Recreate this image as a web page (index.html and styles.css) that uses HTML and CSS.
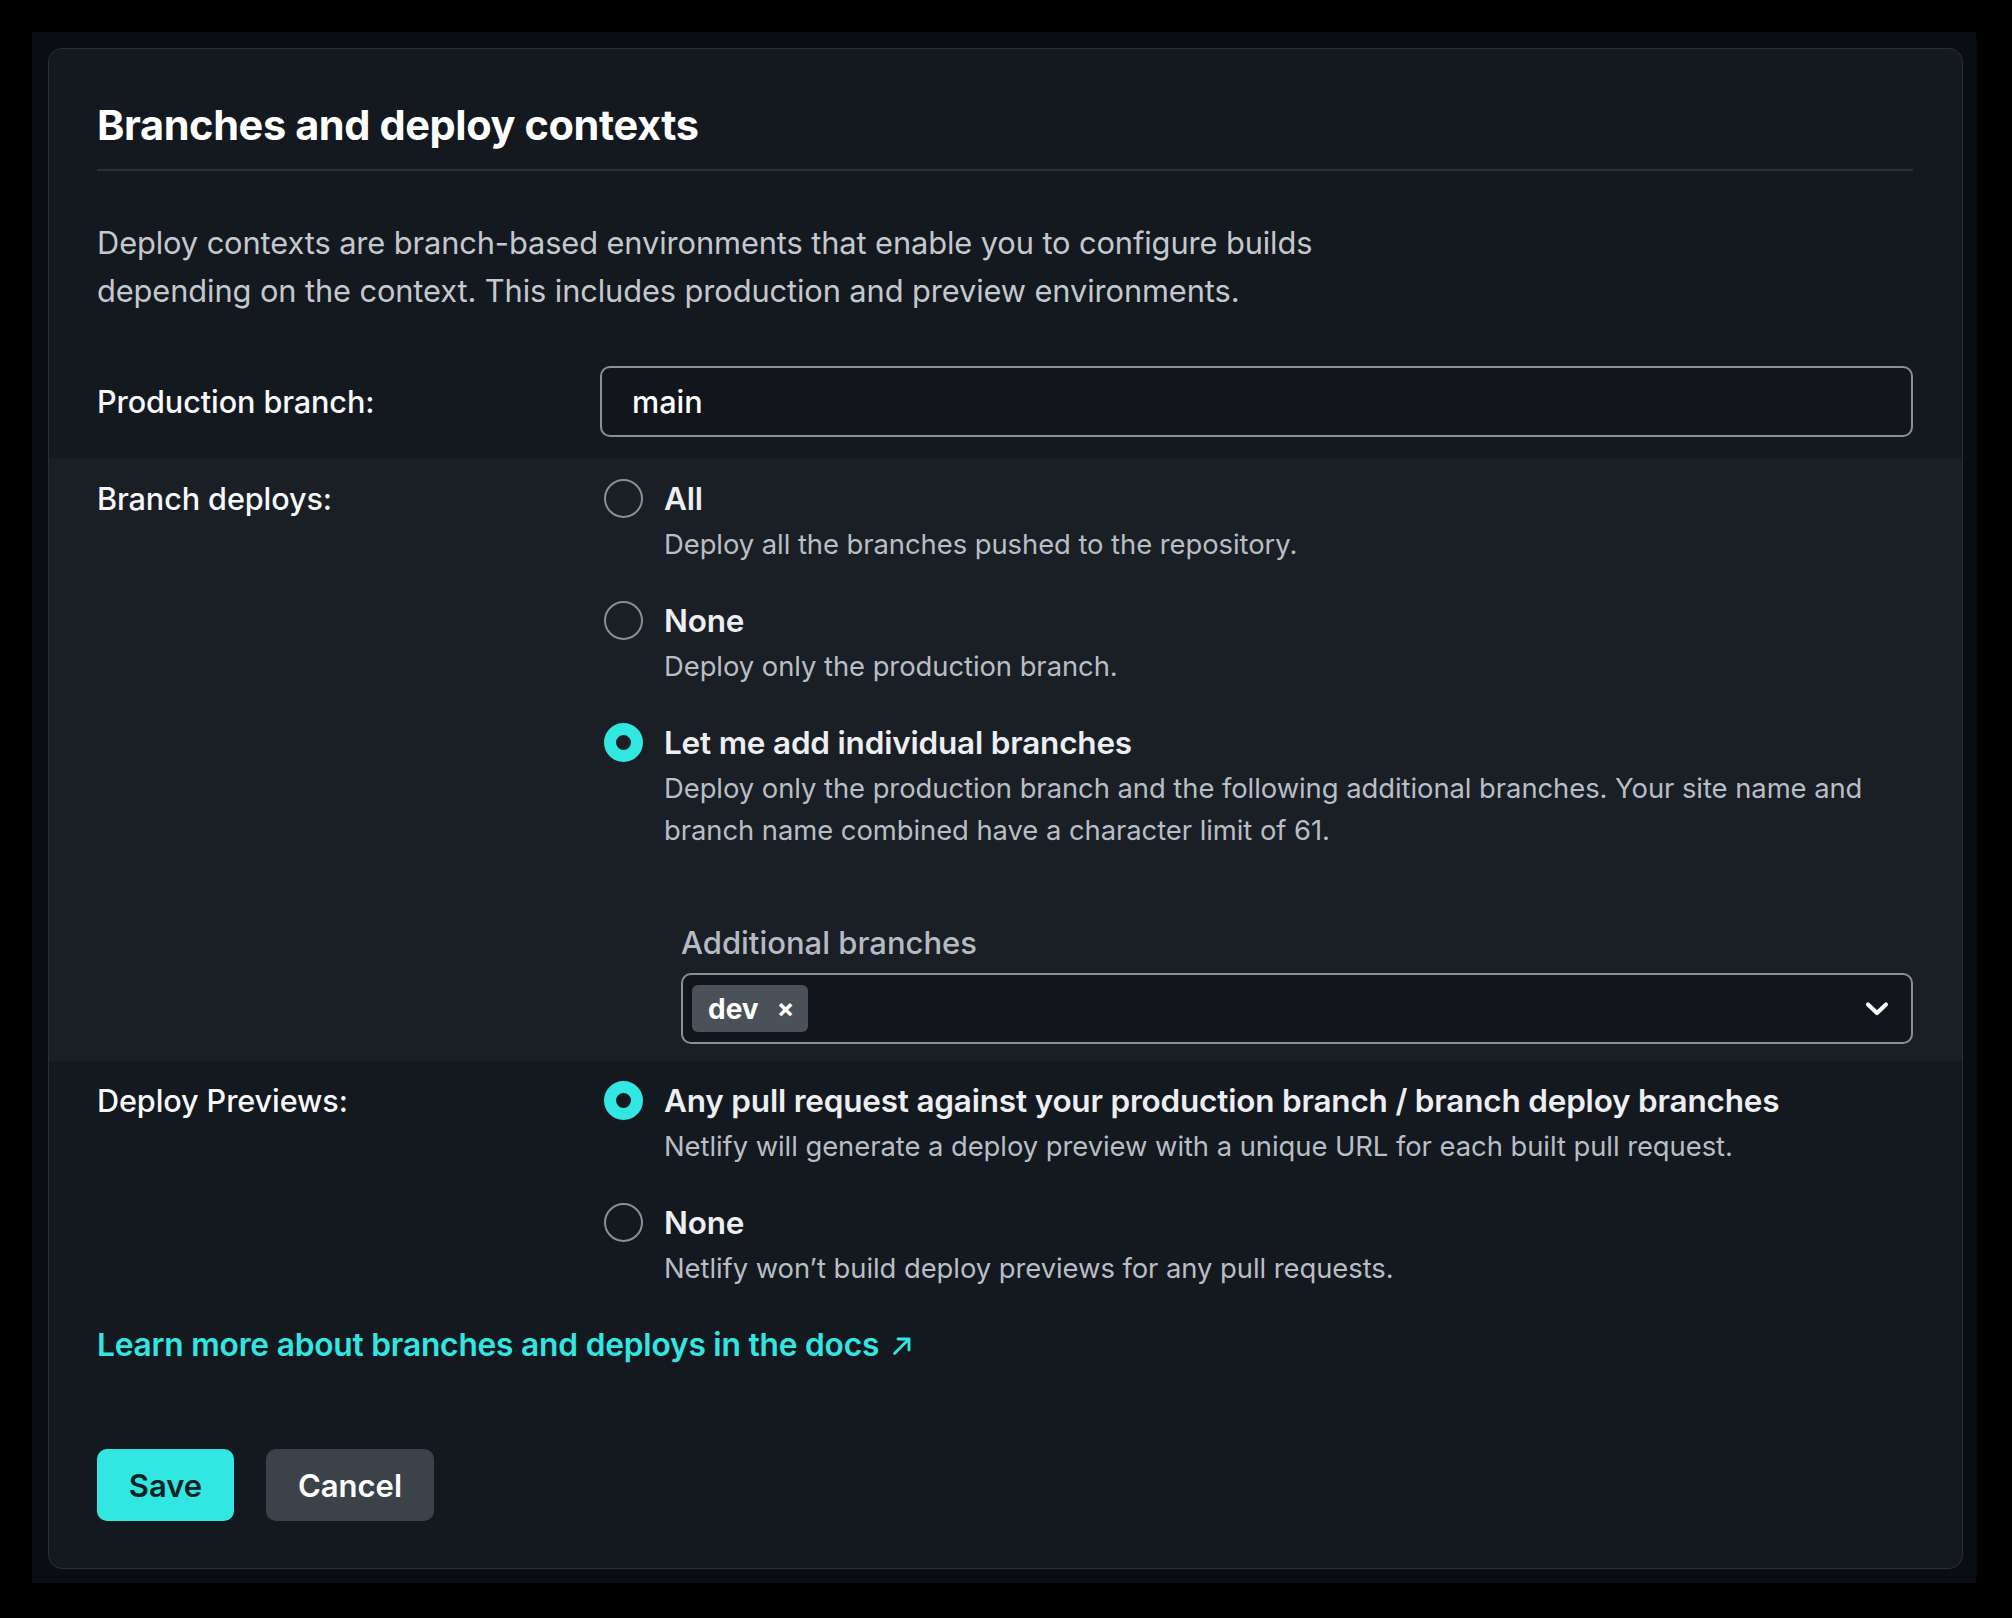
FILE: index.html
```html
<!DOCTYPE html>
<html lang="en">
<head>
<meta charset="utf-8">
<title>Branches and deploy contexts</title>
<link rel="stylesheet" href="styles.css">
</head>
<body>
<div class="frame">
  <section class="card">
    <header class="card-head">
      <h1 class="title">Branches and deploy contexts</h1>
    </header>
    <p class="intro">Deploy contexts are branch-based environments that enable you to configure builds<br>depending on the context. This includes production and preview environments.</p>

    <div class="row row-prod">
      <div class="label">Production branch:</div>
      <div class="field">
        <div class="input">main</div>
      </div>
    </div>

    <div class="row row-shaded">
      <div class="label">Branch deploys:</div>
      <div class="options">
        <div class="option">
          <span class="radio"></span>
          <div class="opt-text">
            <div class="opt-title">All</div>
            <div class="opt-desc">Deploy all the branches pushed to the repository.</div>
          </div>
        </div>
        <div class="option">
          <span class="radio"></span>
          <div class="opt-text">
            <div class="opt-title">None</div>
            <div class="opt-desc">Deploy only the production branch.</div>
          </div>
        </div>
        <div class="option">
          <span class="radio radio-on"></span>
          <div class="opt-text">
            <div class="opt-title">Let me add individual branches</div>
            <div class="opt-desc">Deploy only the production branch and the following additional branches. Your site name and branch name combined have a character limit of 61.</div>
            <div class="extra">
              <div class="extra-label">Additional branches</div>
              <div class="select">
                <span class="tag">dev <span class="tag-x">×</span></span>
                <svg class="chev" width="24" height="16" viewBox="0 0 24 16" aria-hidden="true"><path d="M3 3.5 L12 12 L21 3.5" fill="none" stroke="#ffffff" stroke-width="4.2" stroke-linecap="round" stroke-linejoin="round"/></svg>
              </div>
            </div>
          </div>
        </div>
      </div>
    </div>

    <div class="row row-previews">
      <div class="label">Deploy Previews:</div>
      <div class="options">
        <div class="option">
          <span class="radio radio-on"></span>
          <div class="opt-text">
            <div class="opt-title">Any pull request against your production branch / branch deploy branches</div>
            <div class="opt-desc">Netlify will generate a deploy preview with a unique URL for each built pull request.</div>
          </div>
        </div>
        <div class="option">
          <span class="radio"></span>
          <div class="opt-text">
            <div class="opt-title">None</div>
            <div class="opt-desc">Netlify won’t build deploy previews for any pull requests.</div>
          </div>
        </div>
      </div>
    </div>

    <a class="docs-link" href="#">Learn more about branches and deploys in the docs <svg class="arrow" width="22" height="20" viewBox="0 0 22 20" aria-hidden="true"><path d="M3.5 17.5 L17 4 M7 3 H18 V14" fill="none" stroke="#32e6e2" stroke-width="2.8" stroke-linecap="round" stroke-linejoin="round"/></svg></a>

    <div class="actions">
      <button class="btn btn-save" type="button">Save</button>
      <button class="btn btn-cancel" type="button">Cancel</button>
    </div>
  </section>
</div>
</body>
</html>
```
FILE: styles.css
```css
* { box-sizing: border-box; }

html, body {
  margin: 0;
  padding: 0;
  background: #000000;
}

body {
  font-family: Inter, "Noto Sans", "Liberation Sans", sans-serif;
  color: #f2f4f6;
  width: 2012px;
  height: 1618px;
  padding: 32px 36px 35px 32px;
}

.frame {
  background: #0a0d12;
  padding: 16px 13px 14px 16px;
  box-shadow: 8px 0 0 -7px #0c0d0f;
  height: 1551px;
}

.card {
  background: #14181f;
  border: 1px solid #2a2f37;
  border-radius: 14px;
  height: 1521px;
  display: flex;
  flex-direction: column;
  overflow: hidden;
}

.card-head {
  margin: 0 49px 0 48px;
  padding-top: 52px;
  border-bottom: 2px solid #2b3038;
  height: 122px;
}

.title {
  margin: 0;
  font-size: 41.5px;
  line-height: 48px;
  font-weight: 700;
  letter-spacing: -0.4px;
  color: #ffffff;
}

.intro {
  margin: 0;
  padding: 48px 49px 0 48px;
  font-size: 30.8px;
  line-height: 47.5px;
  color: #c4c8cf;
  letter-spacing: -0.1px;
}

.row {
  display: grid;
  grid-template-columns: 503px 1fr;
  padding: 0 49px 0 48px;
}

.row-prod {
  padding-top: 52px;
  padding-bottom: 21px;
}

.row-prod .label {
  align-self: center;
}

.label {
  font-size: 30.6px;
  line-height: 40px;
  font-weight: 500;
  color: #f7f8fa;
  letter-spacing: -0.1px;
}

.input {
  height: 71px;
  border: 2px solid #8b9098;
  border-radius: 10px;
  background: #12151b;
  padding: 0 30px;
  display: flex;
  align-items: center;
  font-size: 30.6px;
  font-weight: 500;
  color: #ffffff;
}

.row-shaded {
  background: #1a1e25;
  padding-top: 21px;
  padding-bottom: 17px;
}

.row-previews {
  padding-top: 20px;
}

.options {
  display: flex;
  flex-direction: column;
  gap: 36px;
  padding-left: 4px;
}

.option {
  display: flex;
  gap: 21px;
  align-items: flex-start;
}

.radio {
  flex: none;
  width: 39px;
  height: 39px;
  border-radius: 50%;
  border: 2px solid #8a8f97;
  background: transparent;
}

.radio-on {
  border: 12.5px solid #32e6e2;
}

.opt-text {
  flex: 1;
  min-width: 0;
}

.opt-title {
  font-size: 31.5px;
  line-height: 40px;
  font-weight: 600;
  color: #eceef2;
  letter-spacing: -0.2px;
}

.opt-desc {
  font-size: 27.4px;
  line-height: 42px;
  color: #b9bec6;
  margin-top: 4px;
  letter-spacing: -0.05px;
}

.extra {
  margin-left: 17px;
  margin-top: 72px;
}

.extra-label {
  font-size: 31px;
  line-height: 40px;
  font-weight: 500;
  color: #b6bbc3;
  margin-bottom: 10px;
}

.select {
  height: 71px;
  border: 2px solid #8b9098;
  border-radius: 10px;
  background: #12151b;
  display: flex;
  align-items: center;
  justify-content: space-between;
  padding: 0 22px 0 9px;
}

.tag {
  display: inline-flex;
  align-items: center;
  gap: 18px;
  height: 47px;
  padding: 0 14px 0 16px;
  background: #4b5159;
  border-radius: 6px;
  font-size: 28px;
  font-weight: 700;
  color: #ffffff;
}

.tag-x {
  font-size: 26px;
  font-weight: 700;
}

.chev {
  display: block;
}

.docs-link {
  margin: 36px 49px 0 48px;
  font-size: 31.7px;
  line-height: 40px;
  font-weight: 600;
  color: #32e6e2;
  text-decoration: none;
  letter-spacing: -0.2px;
  align-self: flex-start;
}

.arrow {
  margin-left: 4px;
}

.actions {
  display: flex;
  gap: 32px;
  margin: 84px 49px 0 48px;
}

.btn {
  height: 72px;
  border: 0;
  border-radius: 10px;
  font-family: inherit;
  font-size: 31px;
  font-weight: 600;
  padding: 0;
}

.btn-save {
  width: 137px;
  background: #32e6e2;
  color: #0d2226;
}

.btn-cancel {
  width: 168px;
  background: #3c4249;
  color: #ffffff;
}
```
